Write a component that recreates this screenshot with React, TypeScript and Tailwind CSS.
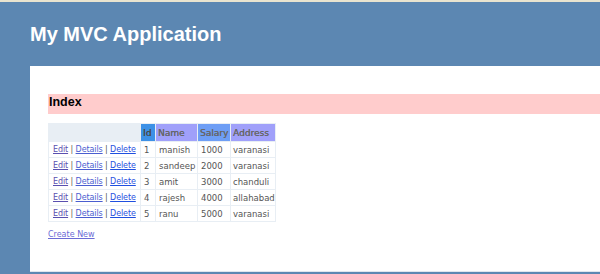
import React from "react";

const rows = [
  { id: 1, name: "manish", salary: 1000, address: "varanasi" },
  { id: 2, name: "sandeep", salary: 2000, address: "varanasi" },
  { id: 3, name: "amit", salary: 3000, address: "chanduli" },
  { id: 4, name: "rajesh", salary: 4000, address: "allahabad" },
  { id: 5, name: "ranu", salary: 5000, address: "varanasi" },
];

export default function App() {
  return (
    <div className="h-[274px] w-[600px] overflow-hidden bg-[#5c87b2] flex flex-col">
      <div className="h-[2px] bg-[#e9e4cf] shrink-0" />
      <div className="h-[64px] shrink-0 pl-[30px] pt-[20px]">
        <h1
          className="text-white font-bold text-[20px] leading-[24px]"
          style={{ fontFamily: '"Liberation Sans", Arial, sans-serif' }}
        >
          My MVC Application
        </h1>
      </div>
      <div
        className="ml-[30px] h-[206px] shrink-0 bg-white pt-[28px] pl-[18px] border-b border-[#dfe6ee]"
        style={{ fontFamily: '"DejaVu Sans", Verdana, sans-serif' }}
      >
        <div className="h-[20px] bg-[#ffcccc] pl-[1px] pt-[1px]">
          <h2
            className="font-bold text-[12.5px] leading-[14px] text-black"
            style={{ fontFamily: '"Liberation Sans", Arial, sans-serif' }}
          >
            Index
          </h2>
        </div>
        <table className="mt-[9px] border-collapse table-fixed w-[227px] text-[8.5px] leading-[10px]">
          <colgroup>
            <col className="w-[92px]" />
            <col className="w-[15px]" />
            <col className="w-[42px]" />
            <col className="w-[33px]" />
            <col className="w-[45px]" />
          </colgroup>
          <thead>
            <tr className="h-[18px]">
              <th className="bg-[#e8eef4] border border-[#e8eef4]" />
              <th className="bg-[#3d91e6] border border-[#e8eef4] text-[#4a4a4a] font-normal text-[9px] text-left px-[2px] [text-shadow:0.3px_0_0_#4a4a4a]">Id</th>
              <th className="bg-[#a0a0fa] border border-[#e8eef4] text-[#666] font-normal text-[9px] text-left px-[2px] [text-shadow:0.3px_0_0_#666]">Name</th>
              <th className="bg-[#6e9ef5] border border-[#e8eef4] text-[#666] font-normal text-[9px] text-left px-[2px] [text-shadow:0.3px_0_0_#666]">Salary</th>
              <th className="bg-[#a0a0fa] border border-[#e8eef4] text-[#666] font-normal text-[9px] text-left px-[2px] [text-shadow:0.3px_0_0_#666]">Address</th>
            </tr>
          </thead>
          <tbody>
            {rows.map((r) => (
              <tr key={r.id} className="h-[16px]">
                <td className="border border-[#e8eef4] pl-[4px] pr-0 text-[8px] tracking-[-0.1px] text-[#555] whitespace-nowrap">
                  <a className="underline text-[#5a4fb0]" href="#">Edit</a>
                  {" | "}
                  <a className="underline text-[#4a5ed0]" href="#">Details</a>
                  {" | "}
                  <a className="underline text-[#1f4fe0]" href="#">Delete</a>
                </td>
                <td className="border border-[#e8eef4] px-[3px] text-[#555]">{r.id}</td>
                <td className="border border-[#e8eef4] px-[3px] text-[#555]">{r.name}</td>
                <td className="border border-[#e8eef4] px-[3px] text-[#555]">{r.salary}</td>
                <td className="border border-[#e8eef4] px-[2px] text-[#555] whitespace-nowrap">{r.address}</td>
              </tr>
            ))}
          </tbody>
        </table>
        <div className="mt-[8px] text-[8px] leading-[10px]">
          <a className="underline text-[#6b6bd6]" href="#">Create New</a>
        </div>
      </div>
    </div>
  );
}
